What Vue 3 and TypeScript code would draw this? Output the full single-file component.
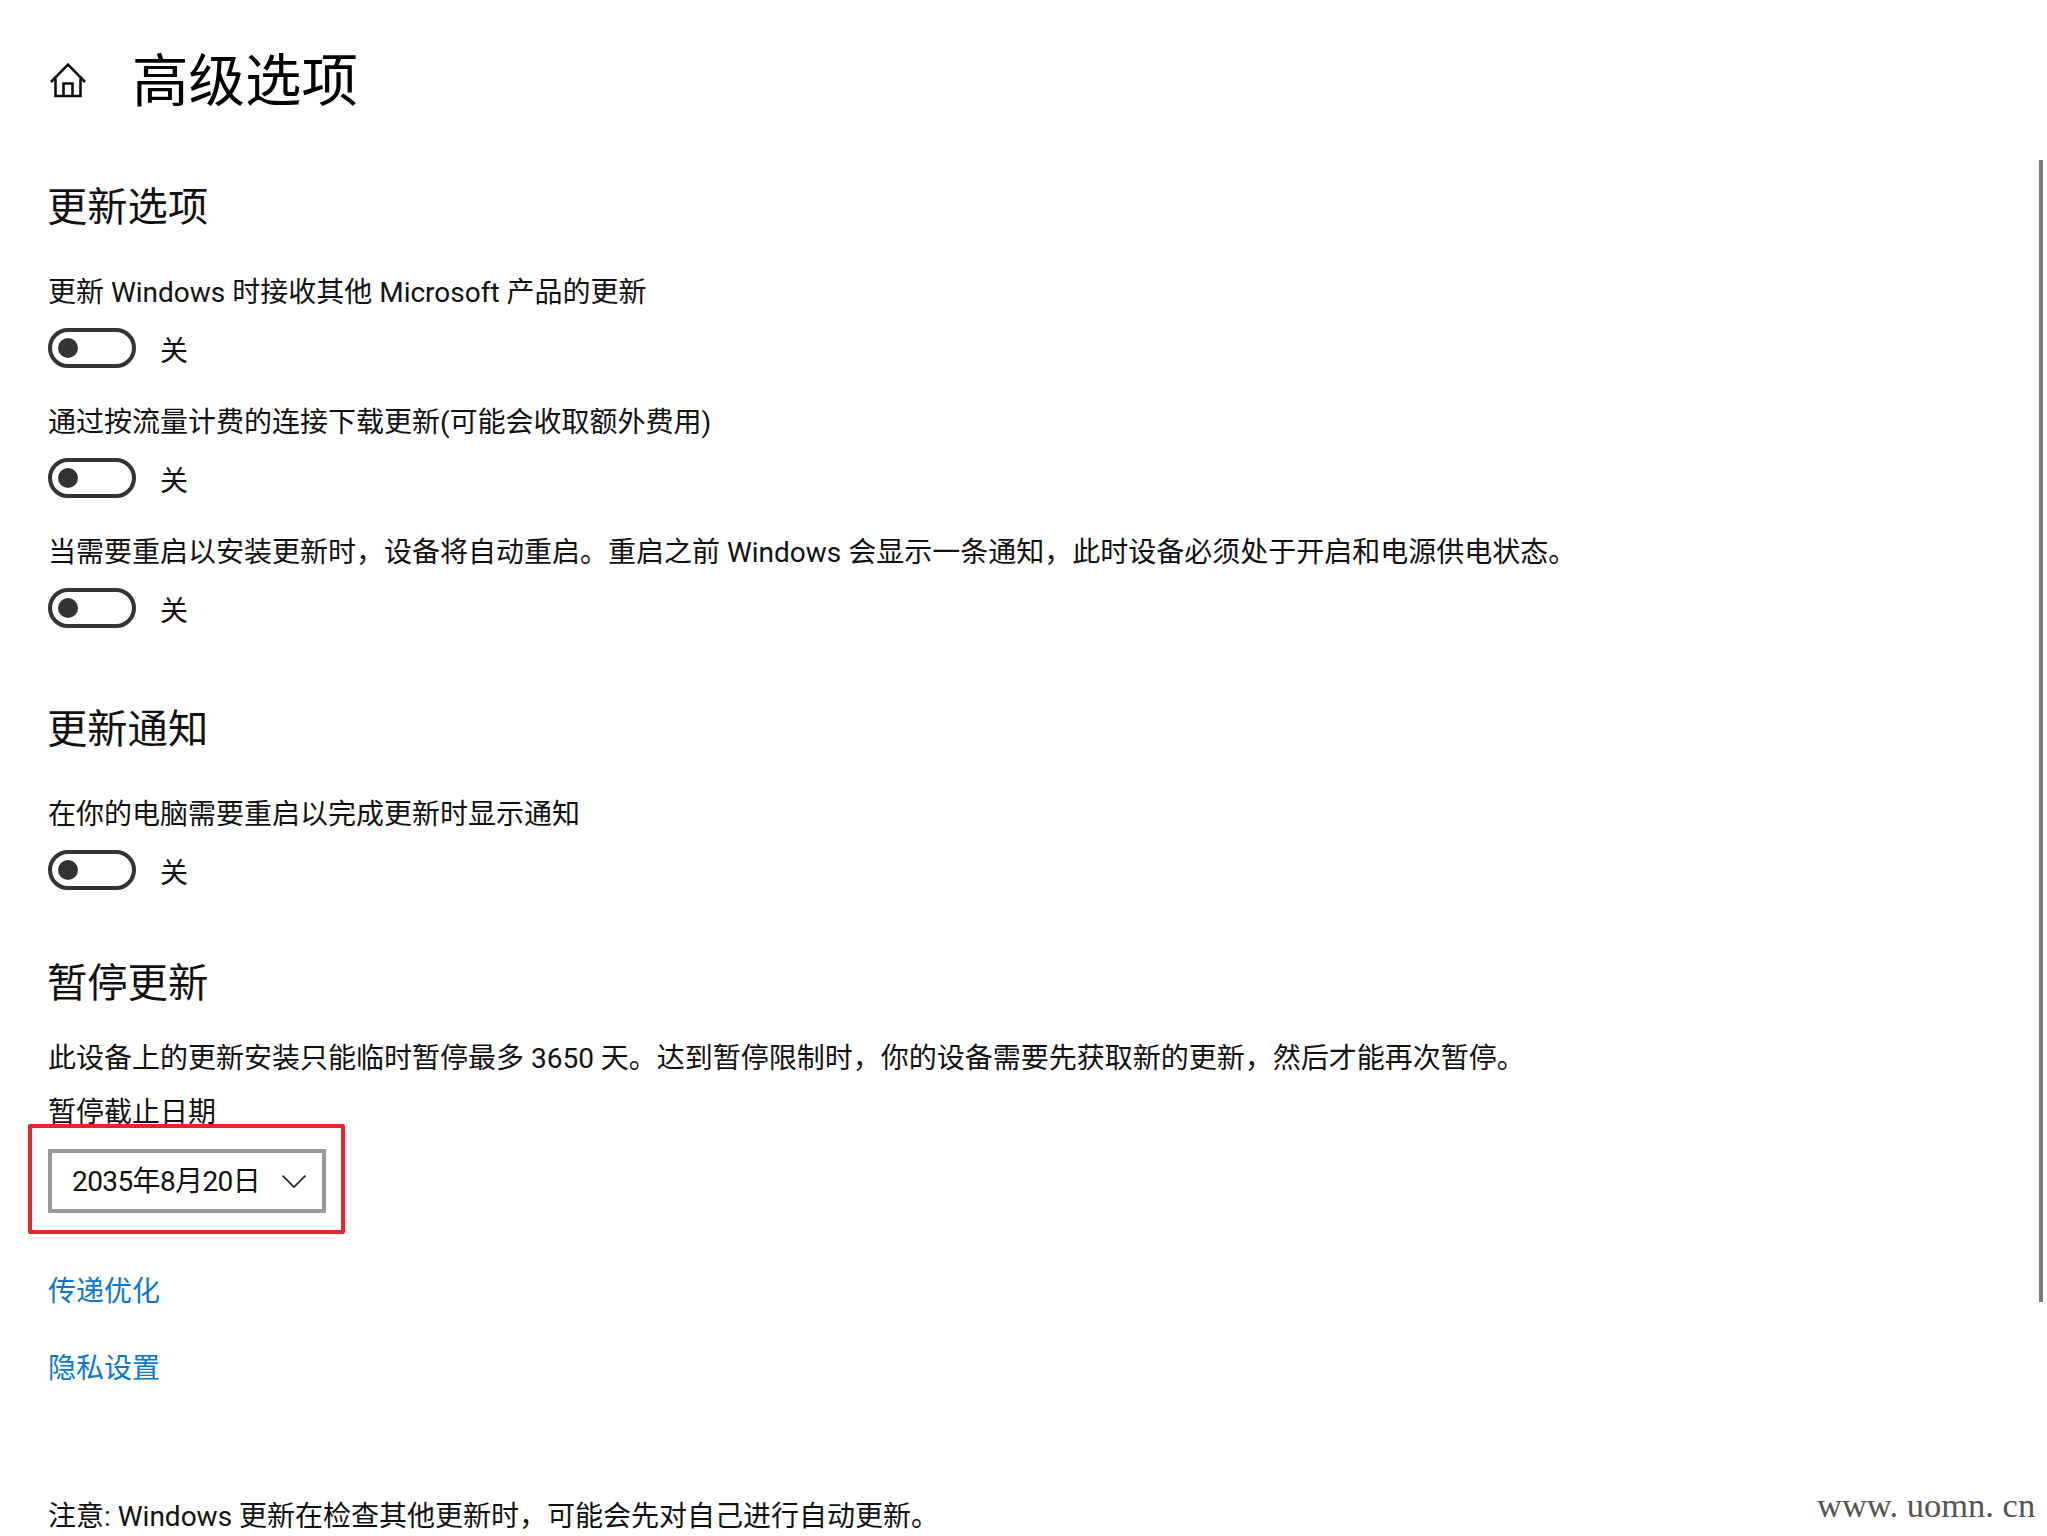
<script setup lang="ts">
interface ToggleItem {
  label: string
  state: string
}

const updateOptions: ToggleItem[] = [
  { label: '更新 Windows 时接收其他 Microsoft 产品的更新', state: '关' },
  { label: '通过按流量计费的连接下载更新(可能会收取额外费用)', state: '关' },
  { label: '当需要重启以安装更新时，设备将自动重启。重启之前 Windows 会显示一条通知，此时设备必须处于开启和电源供电状态。', state: '关' },
]

const notifyOptions: ToggleItem[] = [
  { label: '在你的电脑需要重启以完成更新时显示通知', state: '关' },
]
</script>

<template>
  <div class="page" lang="zh-CN">
    <header class="page-header">
      <svg class="home-icon" viewBox="0 0 36 36" width="36" height="36" fill="none" stroke="#111" stroke-width="2.6">
        <path d="M1 20 18 2.500 35 20" />
        <path d="M5.500 16.500V34H30.500V16.500" />
        <path d="M13.500 34V21.500H22.500V34" />
      </svg>
      <h1>高级选项</h1>
    </header>

    <section class="group first">
      <h2>更新选项</h2>
      <div class="toggle-list">
        <div v-for="item in updateOptions" :key="item.label" class="option">
          <div class="label">{{ item.label }}</div>
          <div class="toggle-row">
            <span class="toggle"><span class="knob"></span></span>
            <span class="state">{{ item.state }}</span>
          </div>
        </div>
      </div>
    </section>

    <section class="group notify">
      <h2>更新通知</h2>
      <div class="toggle-list">
        <div v-for="item in notifyOptions" :key="item.label" class="option">
          <div class="label">{{ item.label }}</div>
          <div class="toggle-row">
            <span class="toggle"><span class="knob"></span></span>
            <span class="state">{{ item.state }}</span>
          </div>
        </div>
      </div>
    </section>

    <section class="group pause">
      <h2>暂停更新</h2>
      <p class="desc">此设备上的更新安装只能临时暂停最多 3650 天。达到暂停限制时，你的设备需要先获取新的更新，然后才能再次暂停。</p>
      <div class="label date-label">暂停截止日期</div>
      <div class="select-wrap">
        <div class="select">
          <span class="select-value">2035年8月20日</span>
          <svg viewBox="0 0 24 13" width="24" height="13" fill="none" stroke="#222" stroke-width="1.7">
            <path d="M.6.6 12 12 23.400.6" />
          </svg>
        </div>
        <div class="highlight"></div>
      </div>
    </section>

    <a class="link first-link">传递优化</a>
    <a class="link second-link">隐私设置</a>

    <p class="note">注意: Windows 更新在检查其他更新时，可能会先对自己进行自动更新。</p>

    <div class="scrollbar"></div>
    <div class="watermark">www. uomn. cn</div>
  </div>
</template>

<style>
html,
body {
  margin: 0;
  background: #fff;
  overflow: hidden;
}
</style>

<style scoped>
.page {
  position: relative;
  box-sizing: border-box;
  height: 1536px;
  padding: 40px 0 0 48px;
  overflow: hidden;
  background: #fff;
  color: #111;
  font-family: Roboto, "Noto Sans CJK SC", sans-serif;
  font-size: 28px;
}

.page-header {
  display: flex;
  align-items: center;
  height: 80px;
}

.home-icon {
  margin-left: 2px;
  margin-right: 46px;
}

h1 {
  margin: 0;
  padding-top: 5px;
  font-size: 56.5px;
  font-weight: 400;
  line-height: 75px;
  color: #000;
}

h2 {
  margin: 0 0 0 -1px;
  padding-top: 4px;
  font-size: 40.3px;
  font-weight: 400;
  line-height: 52px;
}

.group.first {
  margin-top: 58px;
}

.group.notify {
  margin-top: 72px;
}

.group.pause {
  margin-top: 64px;
}

.toggle-list {
  display: flex;
  flex-direction: column;
  gap: 33px;
  margin-top: 37px;
}

.label {
  padding-top: 4px;
  line-height: 36px;
}

.toggle-row {
  display: flex;
  align-items: center;
  margin-top: 17px;
  height: 40px;
}

.toggle {
  box-sizing: border-box;
  display: flex;
  align-items: center;
  width: 88px;
  height: 40px;
  padding-left: 6px;
  border: 4px solid #333;
  border-radius: 20px;
}

.knob {
  width: 20px;
  height: 20px;
  border-radius: 50%;
  background: #333;
}

.state {
  margin-left: 24px;
  padding-top: 8px;
  line-height: 40px;
}

.desc {
  margin: 27px 0 0;
  padding-top: 4px;
  line-height: 36px;
}

.date-label {
  margin-top: 14px;
}

.select-wrap {
  position: relative;
  width: 278px;
  margin-top: 18px;
}

.select {
  box-sizing: border-box;
  display: flex;
  align-items: center;
  justify-content: space-between;
  width: 278px;
  height: 64px;
  padding: 0 16px 0 20px;
  border: 4px solid #999;
}

.select-value {
  margin-bottom: 5px;
  letter-spacing: -0.6px;
}

.highlight {
  position: absolute;
  left: -20px;
  top: -25px;
  width: 317px;
  height: 110px;
  box-sizing: border-box;
  border: 4px solid #e22730;
  border-radius: 2px;
}

.link {
  display: block;
  width: fit-content;
  padding-top: 4px;
  line-height: 36px;
  color: #0a78d0;
  cursor: pointer;
}

.first-link {
  margin-top: 57px;
}

.second-link {
  margin-top: 37px;
}

.note {
  margin: 109px 0 0;
  padding-top: 3px;
  line-height: 36px;
}

.scrollbar {
  position: absolute;
  left: 2039px;
  top: 160px;
  width: 4px;
  height: 1142px;
  background: #7a7a7a;
}

.watermark {
  position: absolute;
  left: 1817px;
  top: 1485px;
  font-family: "Liberation Serif", serif;
  font-size: 34.5px;
  line-height: 40px;
  color: #555;
  white-space: nowrap;
}
</style>
